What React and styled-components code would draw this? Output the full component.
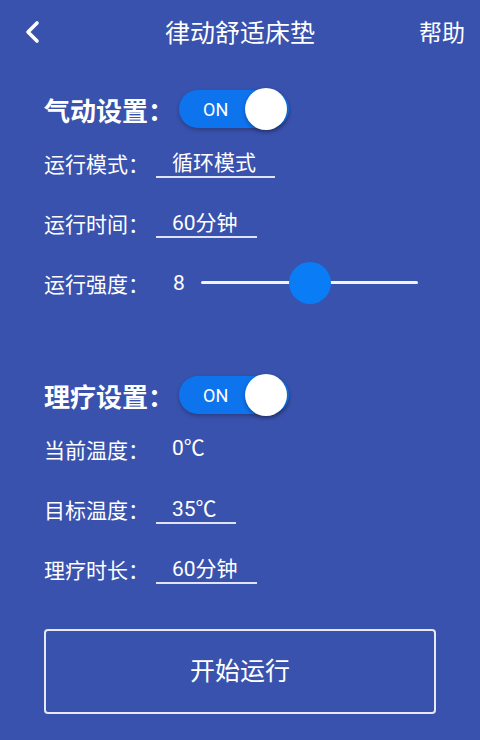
import React from "react";
import styled, { createGlobalStyle } from "styled-components";

const Global = createGlobalStyle`
  html, body {
    margin: 0;
    padding: 0;
    background: #3952ae;
  }
  body {
    font-family: "Noto Sans CJK SC", "Noto Sans", Roboto, sans-serif;
    color: #fff;
  }
`;

const Page = styled.div`
  width: 480px;
  height: 740px;
  background: #3952ae;
  overflow: hidden;
`;

const Header = styled.div`
  height: 64px;
  display: grid;
  grid-template-columns: 70px 1fr 70px;
  align-items: center;
  padding: 0 15px;
  box-sizing: border-box;
`;

const Back = styled.div`
  display: flex;
  align-items: center;
  padding-left: 7px;
`;

const Title = styled.div`
  text-align: center;
  font-size: 25px;
  margin-bottom: 2px;
`;

const Help = styled.div`
  text-align: right;
  font-size: 23px;
  margin-bottom: 2px;
`;

const Body = styled.div`
  padding: 20px 44px 0 44px;
  display: flex;
  flex-direction: column;
`;

const SectionHead = styled.div`
  height: 50px;
  display: flex;
  align-items: center;
  margin-top: ${(p) => (p.$first ? 0 : 56)}px;
`;

const SectionTitle = styled.div`
  font-size: 26px;
  font-weight: 700;
  width: 135px;
  white-space: nowrap;
`;

const Toggle = styled.div`
  position: relative;
  width: 110px;
  height: 38px;
  border-radius: 19px;
  background: #0e74ee;
  display: flex;
  align-items: center;
  box-shadow: 0 2px 4px rgba(0, 0, 0, 0.25);
`;

const ToggleText = styled.span`
  font-family: Roboto, "Noto Sans", sans-serif;
  font-size: 18px;
  margin-left: 24px;
`;

const Knob = styled.span`
  position: absolute;
  right: 2px;
  top: -2px;
  width: 42px;
  height: 42px;
  border-radius: 50%;
  background: #fff;
  box-shadow: 0 2px 4px rgba(0, 0, 0, 0.3);
`;

const Row = styled.div`
  height: 60px;
  display: flex;
  align-items: center;
  font-size: 21px;
  padding-bottom: 3px;
  box-sizing: border-box;
`;

const Label = styled.div`
  width: 112px;
  flex: none;
  white-space: nowrap;
`;

const Value = styled.div`
  font-family: Roboto, "Noto Sans CJK SC", sans-serif;
  padding: 0 19px 0 16px;
  line-height: 26px;
  border-bottom: ${(p) => (p.$underline ? "2px solid #dfe3f2" : "2px solid transparent")};
  margin-top: ${(p) => (p.$underline ? 3 : 0)}px;
  white-space: nowrap;
`;

const SliderWrap = styled.div`
  display: flex;
  align-items: center;
  flex: 1;
  margin-left: 17px;
`;

const SliderValue = styled.span`
  font-family: Roboto, sans-serif;
  width: 28px;
`;

const Track = styled.div`
  position: relative;
  width: 217px;
  height: 3px;
  background: #f2f3f8;
  border-radius: 2px;
`;

const Thumb = styled.span`
  position: absolute;
  top: 50%;
  width: 42px;
  height: 42px;
  border-radius: 50%;
  background: #0a7cf5;
  transform: translate(-50%, -50%);
`;

const StartButton = styled.button`
  margin-top: 29px;
  width: 392px;
  height: 85px;
  background: transparent;
  border: 2px solid #e6e9f4;
  border-radius: 4px;
  color: #fff;
  font-family: "Noto Sans CJK SC", sans-serif;
  font-size: 25px;
  padding-bottom: 6px;
  cursor: pointer;
`;

const Switch = () => (
  <Toggle>
    <ToggleText>ON</ToggleText>
    <Knob />
  </Toggle>
);

const Field = ({ label, value, underline }) => (
  <Row>
    <Label>{label}</Label>
    <Value $underline={underline}>{value}</Value>
  </Row>
);

export default function App() {
  const strength = 8;
  return (
    <Page>
      <Global />
      <Header>
        <Back>
          <svg width="22" height="24" viewBox="0 0 22 24">
            <polyline
              points="15,3 6,12 15,21"
              fill="none"
              stroke="#fff"
              strokeWidth="3.6"
              strokeLinecap="round"
              strokeLinejoin="round"
            />
          </svg>
        </Back>
        <Title>律动舒适床垫</Title>
        <Help>帮助</Help>
      </Header>
      <Body>
        <SectionHead $first>
          <SectionTitle>气动设置：</SectionTitle>
          <Switch />
        </SectionHead>
        <Field label="运行模式：" value="循环模式" underline />
        <Field label="运行时间：" value="60分钟" underline />
        <Row>
          <Label>运行强度：</Label>
          <SliderWrap>
            <SliderValue>{strength}</SliderValue>
            <Track>
              <Thumb style={{ left: `${(strength / 16) * 100}%` }} />
            </Track>
          </SliderWrap>
        </Row>

        <SectionHead>
          <SectionTitle>理疗设置：</SectionTitle>
          <Switch />
        </SectionHead>
        <Field label="当前温度：" value="0℃" />
        <Field label="目标温度：" value="35℃" underline />
        <Field label="理疗时长：" value="60分钟" underline />

        <StartButton>开始运行</StartButton>
      </Body>
    </Page>
  );
}
